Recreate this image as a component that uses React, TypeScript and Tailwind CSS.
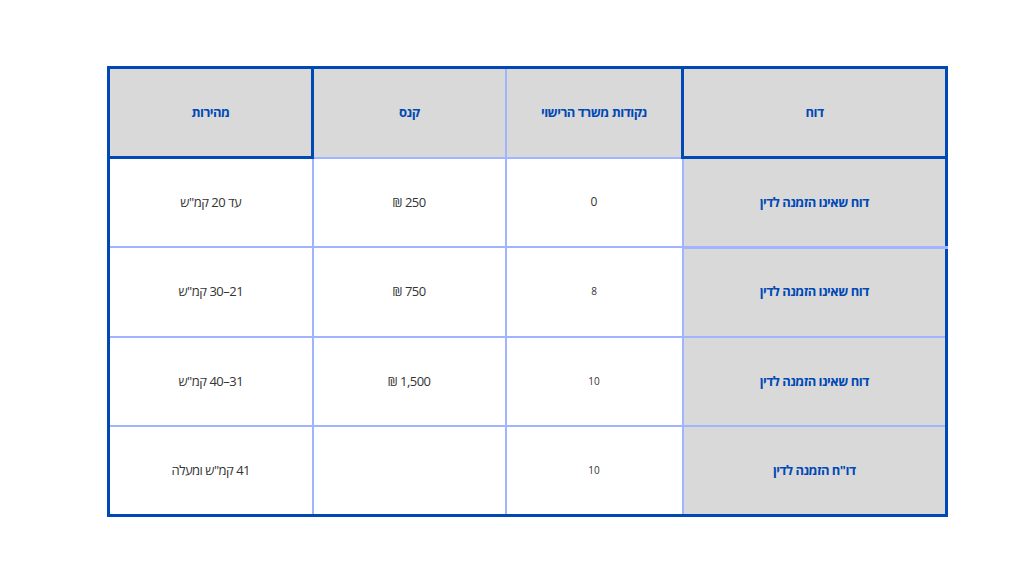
const rows = [
  { report: "דוח שאינו הזמנה לדין", points: "0", pointsSmall: false, fine: "250 ₪", speed: "עד 20 קמ\"ש" },
  { report: "דוח שאינו הזמנה לדין", points: "8", pointsSmall: true, fine: "750 ₪", speed: "21–30 קמ\"ש" },
  { report: "דוח שאינו הזמנה לדין", points: "10", pointsSmall: true, fine: "1,500 ₪", speed: "31–40 קמ\"ש" },
  { report: "דו\"ח הזמנה לדין", points: "10", pointsSmall: true, fine: "", speed: "41 קמ\"ש ומעלה" },
];

export default function App() {
  return (
    <div
      className="w-[1024px] h-[576px] bg-white pt-[66px] pl-[107px]"
      style={{ fontFamily: '"Open Sans", "Noto Sans", "DejaVu Sans", sans-serif' }}
    >
      <table
        dir="rtl"
        className="w-[838px] border-collapse border-[3px] border-[#0049b5] table-fixed"
      >
        <colgroup>
          <col className="w-[264px]" />
          <col className="w-[177px]" />
          <col className="w-[193px]" />
          <col className="w-[204px]" />
        </colgroup>
        <thead>
          <tr className="h-[90px]">
            <th className="bg-[#d9d9d9] border-[3px] border-[#0049b5] text-[13px] font-bold text-[#0049b5] tracking-[-0.04em]">
              דוח
            </th>
            <th className="bg-[#d9d9d9] border-2 border-[#a0b4ff] text-[13px] font-bold text-[#0049b5] tracking-[-0.04em]">
              נקודות משרד הרישוי
            </th>
            <th className="bg-[#d9d9d9] border-2 border-[#a0b4ff] text-[13px] font-bold text-[#0049b5] tracking-[-0.04em]">
              קנס
            </th>
            <th className="bg-[#d9d9d9] border-[3px] border-[#0049b5] text-[13px] font-bold text-[#0049b5] tracking-[-0.04em]">
              מהירות
            </th>
          </tr>
        </thead>
        <tbody>
          {rows.map((r, i) => (
            <tr key={i} className="h-[89.5px]">
              <td
                className={`bg-[#d9d9d9] border-2 border-[#a0b4ff] text-center text-[13px] font-bold text-[#0049b5] tracking-[-0.04em] ${i === 0 ? "border-b-[3px]" : ""}`}
              >
                {r.report}
              </td>
              <td
                className={`border-2 border-[#a0b4ff] text-center text-[#333] ${r.pointsSmall ? "text-[10px]" : "text-[12px]"}`}
              >
                {r.points}
              </td>
              <td className="border-2 border-[#a0b4ff] text-center text-[13px] text-[#333] tracking-[-0.04em]">
                <span dir="rtl">{r.fine}</span>
              </td>
              <td className="border-2 border-[#a0b4ff] text-center text-[13px] text-[#333] tracking-[-0.04em]">
                {r.speed}
              </td>
            </tr>
          ))}
        </tbody>
      </table>
    </div>
  );
}
